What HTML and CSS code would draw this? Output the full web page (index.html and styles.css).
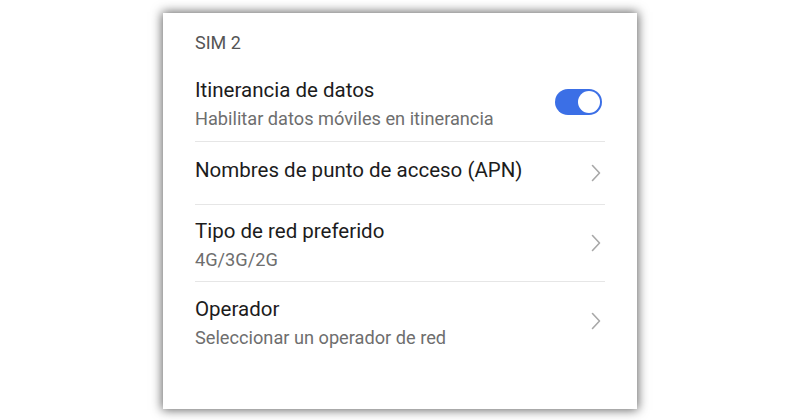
FILE: index.html
```html
<!DOCTYPE html>
<html lang="es">
<head>
<meta charset="utf-8">
<title>SIM 2</title>
<link rel="stylesheet" href="styles.css">
</head>
<body>
<div class="page">
  <div class="card">
    <div class="section-title">SIM 2</div>
    <div class="item item-first">
      <div class="texts">
        <div class="title">Itinerancia de datos</div>
        <div class="subtitle">Habilitar datos móviles en itinerancia</div>
      </div>
      <div class="toggle"><div class="knob"></div></div>
    </div>
    <div class="item item-single">
      <div class="texts texts-single">
        <div class="title">Nombres de punto de acceso (APN)</div>
      </div>
      <svg class="chevron" width="10" height="18" viewBox="0 0 10 18"><path d="M1.5 1.5 L8.5 9 L1.5 16.5" fill="none" stroke="#a8a8a8" stroke-width="1.6" stroke-linecap="round" stroke-linejoin="round"/></svg>
    </div>
    <div class="item">
      <div class="texts">
        <div class="title">Tipo de red preferido</div>
        <div class="subtitle">4G/3G/2G</div>
      </div>
      <svg class="chevron" width="10" height="18" viewBox="0 0 10 18"><path d="M1.5 1.5 L8.5 9 L1.5 16.5" fill="none" stroke="#a8a8a8" stroke-width="1.6" stroke-linecap="round" stroke-linejoin="round"/></svg>
    </div>
    <div class="item item-last">
      <div class="texts">
        <div class="title">Operador</div>
        <div class="subtitle">Seleccionar un operador de red</div>
      </div>
      <svg class="chevron" width="10" height="18" viewBox="0 0 10 18"><path d="M1.5 1.5 L8.5 9 L1.5 16.5" fill="none" stroke="#a8a8a8" stroke-width="1.6" stroke-linecap="round" stroke-linejoin="round"/></svg>
    </div>
  </div>
</div>
</body>
</html>
```

FILE: styles.css
```css
html, body {
  margin: 0;
  padding: 0;
  background: #ffffff;
}

.page {
  width: 800px;
  height: 420px;
  padding: 13px 0 0 163px;
  box-sizing: border-box;
  overflow: hidden;
}

.card {
  width: 474px;
  height: 396px;
  background: #ffffff;
  box-shadow: 0 0 10px 1px rgba(0, 0, 0, 0.62);
  padding: 0 32px;
  box-sizing: border-box;
  font-family: Roboto, "Noto Sans", sans-serif;
}

.section-title {
  font-size: 18px;
  line-height: 24px;
  color: #555555;
  height: 50px;
  padding-top: 18px;
  box-sizing: border-box;
}

.item {
  display: flex;
  align-items: center;
  justify-content: space-between;
  height: 77px;
  border-bottom: 1px solid #e6e6e6;
  box-sizing: border-box;
}

.item-first {
  height: 79px;
}

.item-single {
  height: 63px;
}

.item-last {
  border-bottom: none;
}

.texts {
  display: flex;
  flex-direction: column;
  padding-top: 3px;
}

.texts-single {
  padding-top: 0;
  padding-bottom: 7px;
}

.title {
  font-size: 20.5px;
  line-height: 26px;
  color: #1c1c1c;
}

.subtitle {
  font-size: 18.2px;
  line-height: 22px;
  margin-top: 5px;
  color: #6e6e6e;
}

.toggle {
  width: 47px;
  height: 26px;
  border-radius: 13px;
  background: #3b6fe6;
  display: flex;
  align-items: center;
  justify-content: flex-end;
  padding: 0 2px;
  box-sizing: border-box;
  margin-right: 3px;
}

.knob {
  width: 22px;
  height: 22px;
  border-radius: 50%;
  background: #ffffff;
}

.chevron {
  display: block;
  margin-right: 4px;
}
```
